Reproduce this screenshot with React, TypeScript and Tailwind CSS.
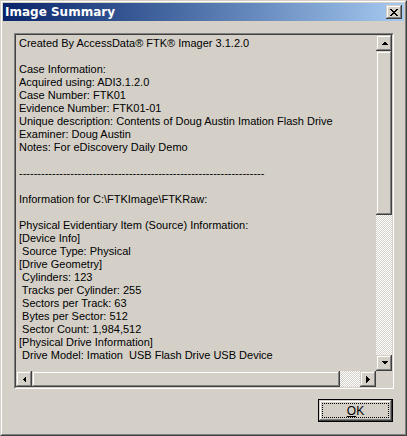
import React from "react";

const lines = [
  "Created By AccessData® FTK® Imager 3.1.2.0",
  "",
  "Case Information:",
  "Acquired using: ADI3.1.2.0",
  "Case Number: FTK01",
  "Evidence Number: FTK01-01",
  "Unique description: Contents of Doug Austin Imation Flash Drive",
  "Examiner: Doug Austin",
  "Notes: For eDiscovery Daily Demo",
  "",
  "-".repeat(67),
  "",
  "Information for C:\\FTKImage\\FTKRaw:",
  "",
  "Physical Evidentiary Item (Source) Information:",
  "[Device Info]",
  " Source Type: Physical",
  "[Drive Geometry]",
  " Cylinders: 123",
  " Tracks per Cylinder: 255",
  " Sectors per Track: 63",
  " Bytes per Sector: 512",
  " Sector Count: 1,984,512",
  "[Physical Drive Information]",
  " Drive Model: Imation  USB Flash Drive USB Device",
];

// classic raised 3D edge
const raised =
  "bg-[#d4d0c8] shadow-[inset_-1px_-1px_0_#404040,inset_1px_1px_0_#d4d0c8,inset_-2px_-2px_0_#808080,inset_2px_2px_0_#ffffff]";

const checker =
  "bg-[repeating-conic-gradient(#ffffff_0_25%,#d4d0c8_0_50%)] bg-[length:2px_2px]";

function Arrow({ dir }: { dir: "up" | "down" | "left" | "right" }) {
  const pts = {
    up: "0,4 7,4 3.5,0.5",
    down: "0,0 7,0 3.5,3.5",
    left: "4,0 4,7 0.5,3.5",
    right: "0,0 0,7 3.5,3.5",
  }[dir];
  const vertical = dir === "up" || dir === "down";
  return (
    <div className={`w-[16px] h-[16px] shrink-0 flex items-center justify-center ${raised}`}>
      <svg
        width={vertical ? 7 : 4}
        height={vertical ? 4 : 7}
        viewBox={vertical ? "0 0 7 4" : "0 0 4 7"}
        shapeRendering="crispEdges"
      >
        <polygon points={pts} fill="#000" />
      </svg>
    </div>
  );
}

export default function App() {
  return (
    <div className="w-[407px] h-[436px] border border-t-[#d4d0c8] border-l-[#d4d0c8] border-b-[#404040] border-r-[#404040] font-['Liberation_Sans',Arial,sans-serif]">
      <div className="w-full h-full border border-t-white border-l-white border-b-[#808080] border-r-[#808080] bg-[#d4d0c8] p-[1px] flex flex-col">
        {/* Title bar */}
        <div className="h-[18px] shrink-0 flex items-center justify-between pl-[2px] pr-[2px] bg-gradient-to-r from-[#0a246a] to-[#a6caf0]">
          <span className="text-white font-bold text-[12px] leading-none font-['DejaVu_Sans',sans-serif]">
            Image Summary
          </span>
          <div className={`w-[16px] h-[14px] flex items-center justify-center ${raised}`}>
            <svg width="8" height="7" viewBox="0 0 8 7" shapeRendering="crispEdges">
              <path d="M0 0h2v1H0zM6 0h2v1H6zM1 1h2v1H1zM5 1h2v1H5zM2 2h4v1H2zM3 3h2v1H3zM2 4h4v1H2zM1 5h2v1H1zM5 5h2v1H5zM0 6h2v1H0zM6 6h2v1H6z" fill="#000" />
            </svg>
          </div>
        </div>

        {/* Body */}
        <div className="flex-1 flex flex-col pt-[12px] pl-[11px] pr-[10px]">
          <div className="h-[356px] border border-t-[#808080] border-l-[#808080] border-b-white border-r-white">
            <div className="w-full h-full border border-t-[#404040] border-l-[#404040] border-b-[#d4d0c8] border-r-[#d4d0c8] flex flex-col">
              <div className="flex-1 flex min-h-0">
                <div className="flex-1 overflow-hidden pl-[3px] pt-[2px] text-[11px] leading-[13px] text-black whitespace-pre">
                  {lines.map((l, i) => (
                    <div key={i} className="h-[13px]">
                      {l}
                    </div>
                  ))}
                </div>
                {/* vertical scrollbar */}
                <div className="w-[16px] flex flex-col">
                  <Arrow dir="up" />
                  <div className={`h-[164px] ${raised}`} />
                  <div className={`flex-1 ${checker}`} />
                  <Arrow dir="down" />
                </div>
              </div>
              {/* horizontal scrollbar */}
              <div className="h-[16px] flex">
                <Arrow dir="left" />
                <div className={`w-[308px] ${raised}`} />
                <div className={`flex-1 ${checker}`} />
                <Arrow dir="right" />
                <div className="w-[16px] bg-[#d4d0c8]" />
              </div>
            </div>
          </div>

          <div className="flex justify-end mt-[10px] pr-[1px]">
            <button className="w-[75px] h-[23px] border border-black p-0 bg-[#d4d0c8]">
              <div className={`w-full h-full flex items-center justify-center p-[3px] ${raised}`}>
                <div className="w-full h-full border border-dotted border-black flex items-center justify-center text-[12px] text-black leading-none">
                  <span>
                    <span className="underline">O</span>K
                  </span>
                </div>
              </div>
            </button>
          </div>
        </div>
      </div>
    </div>
  );
}
